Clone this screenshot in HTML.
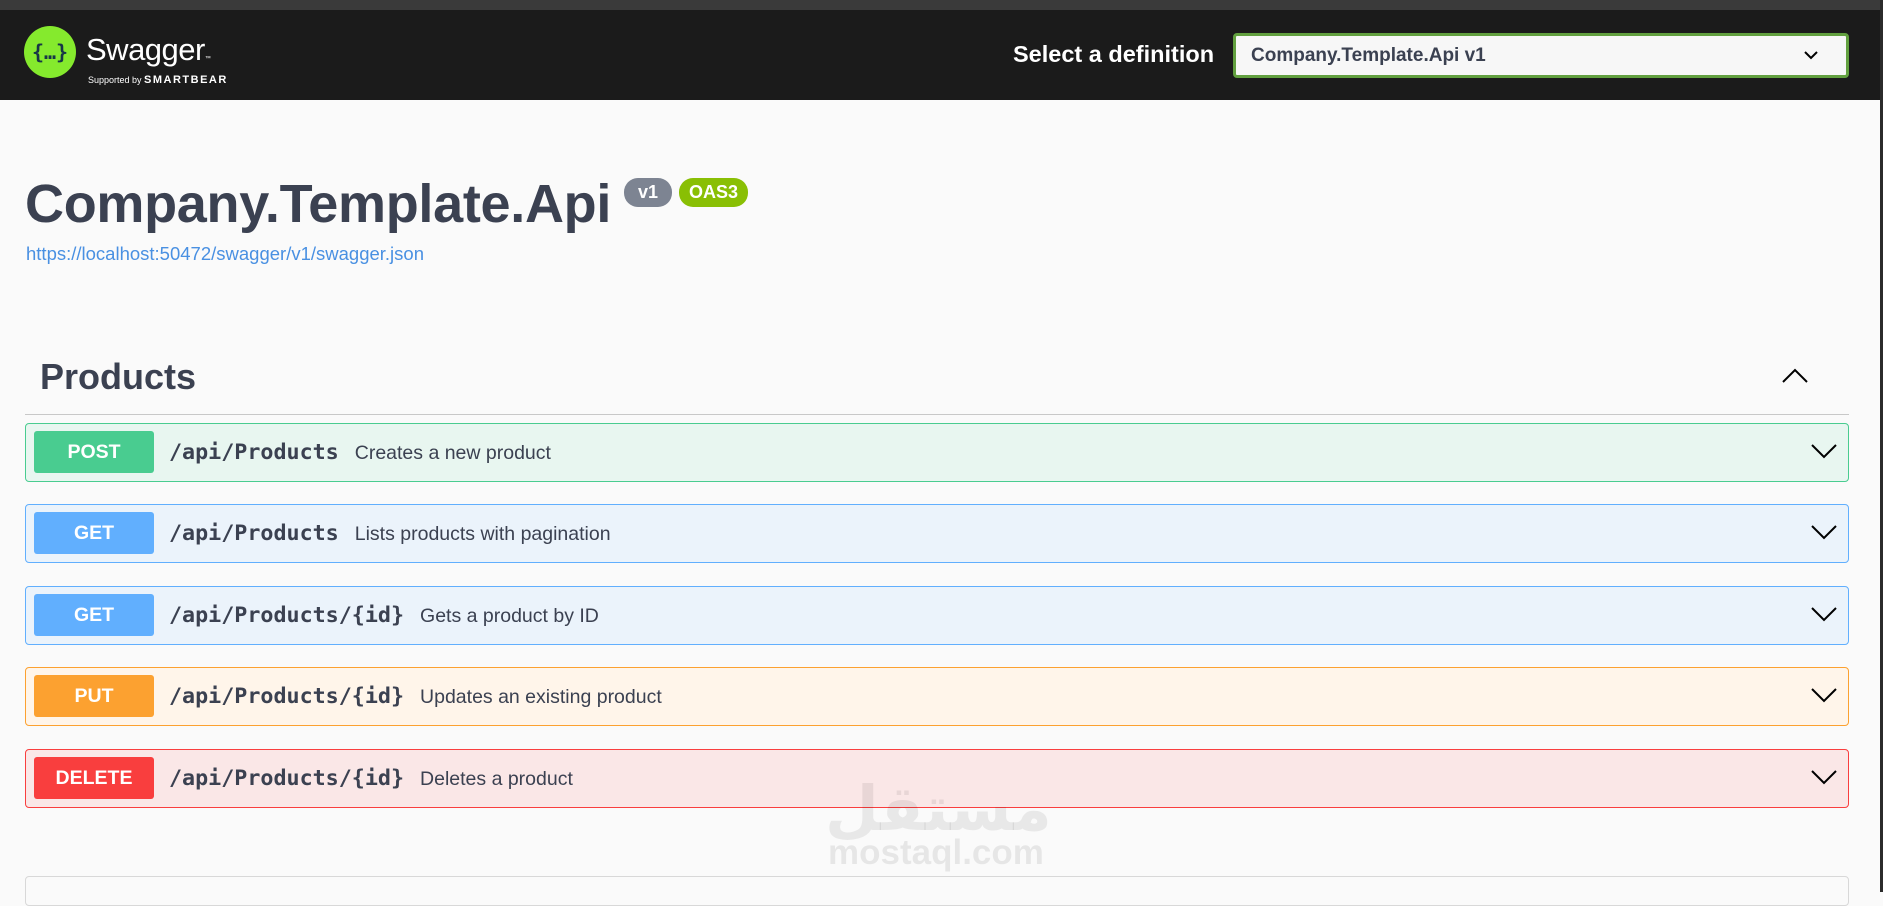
<!DOCTYPE html>
<html><head><meta charset="utf-8"><style>
*{box-sizing:border-box;margin:0;padding:0}
body{width:1883px;height:892px;overflow:hidden;background:#fafafa;font-family:"Liberation Sans",Arial,sans-serif;position:relative}
.top{position:absolute;left:0;top:0;width:1883px;height:12px;background:#3a3a3a}
.hdr{position:absolute;left:0;top:10px;width:1880px;height:90px;background:#1b1b1b}
.rb{position:absolute;right:0;top:0;width:3px;height:892px;background:#2b2b2b}
.abs{position:absolute}
.op{position:absolute;left:25px;width:1824px;height:59px;border:1px solid;border-radius:4px}
.m{position:absolute;left:8px;top:7px;width:120px;height:42px;border-radius:3px;color:#fff;font-weight:bold;font-size:19.5px;text-align:center;line-height:42px}
.p{position:absolute;left:143px;top:0;line-height:57px;font-family:"DejaVu Sans Mono","Liberation Mono",monospace;font-weight:bold;font-size:21.7px;color:#3b4151}
.d{font-family:"Liberation Sans",sans-serif;font-weight:normal;font-size:19.5px;margin-left:16px}
.ch{position:absolute;right:10px;top:18px}
</style></head><body>
<div class="top"></div>
<div class="hdr">
<svg class="abs" style="left:24px;top:16px" width="52" height="52"><circle cx="26" cy="26" r="26" fill="#85ea2d"/><text x="26" y="33" text-anchor="middle" font-family="DejaVu Sans Mono,monospace" font-weight="bold" font-size="20" fill="#173647">{…}</text></svg>
<div class="abs" style="left:86px;top:22px;color:#fff;font-size:31px;letter-spacing:-0.5px">Swagger<span style="font-size:6px">™</span></div>
<div class="abs" style="left:88px;top:64px;color:#fff;font-size:9px">Supported by <b style="font-size:11px;letter-spacing:1.5px">SMARTBEAR</b></div>
<div class="abs" style="left:1013px;top:31px;color:#fff;font-size:23.5px;font-weight:bold">Select a definition</div>
<div class="abs" style="left:1233px;top:23px;width:616px;height:45px;border:3px solid #62a03f;border-radius:4px;background:#f7f7f7;font-weight:bold;font-size:19px;color:#3b4151;padding:9px 0 0 15px">Company.Template.Api v1
<svg class="abs" style="right:28px;top:15px" width="14" height="9"><path d="M1 1l6 6 6-6" stroke="#000" stroke-width="2" fill="none"/></svg></div>
</div>
<div class="rb"></div>
<div class="abs" style="left:25px;top:173px;font-size:54px;font-weight:bold;color:#3b4151;letter-spacing:-0.3px">Company.Template.Api</div>
<div class="abs" style="left:624px;top:178px;width:48px;height:29px;border-radius:14px;background:#7d8492;color:#fff;font-weight:bold;font-size:18px;text-align:center;line-height:29px">v1</div>
<div class="abs" style="left:679px;top:178px;width:69px;height:29px;border-radius:14px;background:#89bf04;color:#fff;font-weight:bold;font-size:18px;text-align:center;line-height:29px">OAS3</div>
<div class="abs" style="left:26px;top:243px;font-size:18.5px;color:#4990e2">https://localhost:50472/swagger/v1/swagger.json</div>
<div class="abs" style="left:40px;top:356px;font-size:36px;font-weight:bold;color:#3b4151">Products</div>
<svg class="abs" style="left:1781px;top:367px" width="28" height="16"><path d="M2 15L14 3l12 12" stroke="#000" stroke-width="2" fill="none"/></svg>
<div class="abs" style="left:25px;top:414px;width:1824px;height:1px;background:#c8c8c8"></div>

<div class="op" style="top:423px;background:#e8f6f0;border-color:#49cc90"><div class="m" style="background:#49cc90">POST</div><div class="p">/api/Products<span class="d">Creates a new product</span></div><svg class="ch" width="28" height="18"><path d="M2 3l12 12 12-12" stroke="#000" stroke-width="2" fill="none"/></svg></div>
<div class="op" style="top:504px;background:#ebf3fb;border-color:#61affe"><div class="m" style="background:#61affe">GET</div><div class="p">/api/Products<span class="d">Lists products with pagination</span></div><svg class="ch" width="28" height="18"><path d="M2 3l12 12 12-12" stroke="#000" stroke-width="2" fill="none"/></svg></div>
<div class="op" style="top:586px;background:#ebf3fb;border-color:#61affe"><div class="m" style="background:#61affe">GET</div><div class="p">/api/Products/{id}<span class="d">Gets a product by ID</span></div><svg class="ch" width="28" height="18"><path d="M2 3l12 12 12-12" stroke="#000" stroke-width="2" fill="none"/></svg></div>
<div class="op" style="top:667px;background:#fff5ea;border-color:#fca130"><div class="m" style="background:#fca130">PUT</div><div class="p">/api/Products/{id}<span class="d">Updates an existing product</span></div><svg class="ch" width="28" height="18"><path d="M2 3l12 12 12-12" stroke="#000" stroke-width="2" fill="none"/></svg></div>
<div class="op" style="top:749px;background:#fae7e7;border-color:#f93e3e"><div class="m" style="background:#f93e3e">DELETE</div><div class="p">/api/Products/{id}<span class="d">Deletes a product</span></div><svg class="ch" width="28" height="18"><path d="M2 3l12 12 12-12" stroke="#000" stroke-width="2" fill="none"/></svg></div>

<div class="abs" style="left:825px;top:772px;font-size:62px;font-weight:bold;color:rgba(0,0,0,0.07);font-family:'DejaVu Sans',sans-serif">مستقل</div>
<div class="abs" style="left:828px;top:833px;font-size:35px;font-weight:bold;color:rgba(0,0,0,0.08)">mostaql.com</div>
<div class="abs" style="left:25px;top:876px;width:1824px;height:30px;border:1px solid #d8d8d8;border-radius:4px"></div>
</body></html>
